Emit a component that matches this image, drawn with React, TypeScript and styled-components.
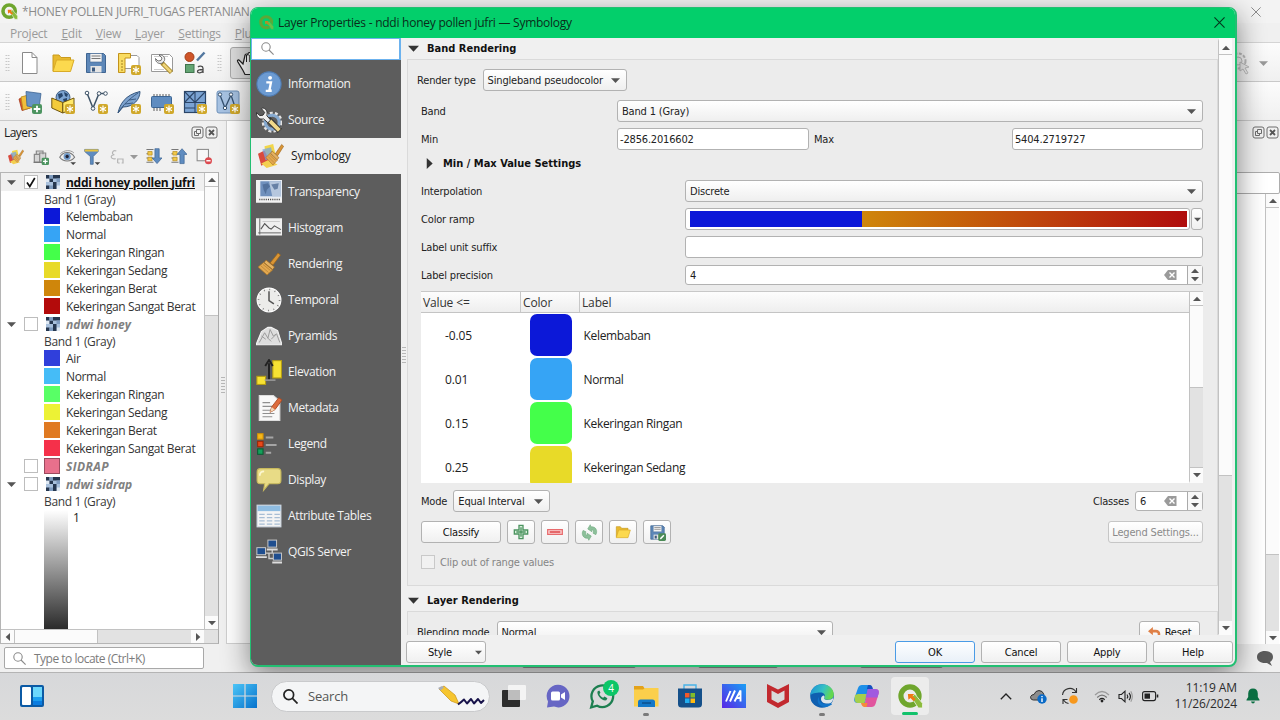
import React from "react";
import styled, { createGlobalStyle, css } from "styled-components";

const ui = `"Open Sans", "Noto Sans", sans-serif`;
const shell = `"DejaVu Sans Condensed", "DejaVu Sans", sans-serif`;

const Global = createGlobalStyle`
  * { box-sizing: border-box; }
  body { margin: 0; overflow: hidden; font-family: ${ui}; font-size: 12px; color: #1c1c1c; }
  svg { display: block; flex: none; }
`;

/* ---------- shell of the desktop ---------- */

const Desktop = styled.div`
  position: relative;
  width: 1280px;
  height: 720px;
  display: flex;
  flex-direction: column;
  overflow: hidden;
  background: #d9dadb;
`;
const MainWindow = styled.div`
  height: 673px;
  display: flex;
  flex-direction: column;
  background: #f0f0f0;
  border-bottom: 1px solid #b4b4b4;
`;
const MainTitle = styled.div`
  height: 23px;
  display: flex;
  align-items: center;
  justify-content: space-between;
  padding: 0 19px 0 1px;
  background: #f3f3f3;
  color: #8b8b8b;
`;
const TitleText = styled.div`
  display: flex;
  align-items: center;
  gap: 4px;
  white-space: nowrap;
  font-size: 12px;
  letter-spacing: -0.31px;
`;
const MenuBar = styled.div`
  height: 20px;
  display: flex;
  align-items: center;
  gap: 14px;
  padding: 1px 0 0 10px;
  color: #9a9a9a;
  border-bottom: 1px solid #d4d4d4;
  span { letter-spacing: -0.25px; }
`;
const Toolbar = styled.div`
  height: 39px;
  display: flex;
  align-items: center;
  padding: 2px 12px 0 5px;
  background: linear-gradient(#fcfcfc, #f0f0f0);
  border-bottom: 1px solid #c9c9c9;
`;
const Handle = styled.div<{ $ml?: number }>`
  width: 5px;
  height: 18px;
  margin: 0 8px 0 ${(p) => p.$ml || 0}px;
  background-image: radial-gradient(circle, #bdbdbd 0.7px, transparent 0.9px);
  background-size: 2.5px 3px;
`;
const ToolIcons = styled.div`
  display: flex;
  gap: 9px;
`;
const PressedTool = styled.div`
  width: 34px;
  height: 32px;
  border: 1px solid #aaa;
  border-radius: 3px;
  background: #dedede;
  display: flex;
  align-items: center;
  padding-left: 5px;
`;
const Spacer = styled.div`
  flex: 1;
`;
const Work = styled.div`
  flex: 1;
  min-height: 0;
  display: flex;
`;
const LayersDock = styled.div`
  width: 219px;
  display: flex;
  flex-direction: column;
`;
const DockHeader = styled.div`
  height: 21px;
  display: flex;
  align-items: center;
  gap: 1px;
  padding: 1px 1px 0 4px;
  span { flex: 1; letter-spacing: -0.55px; }
`;
const DockTools = styled.div`
  height: 30px;
  display: flex;
  align-items: center;
  padding: 0 4px 1px 7px;
`;
const ToolSlot = styled.div<{ $w: number }>`
  width: ${(p) => p.$w}px;
  display: flex;
  justify-content: center;
`;
const TreeFrame = styled.div`
  flex: 1;
  display: grid;
  grid-template: 1fr 14px / 1fr 14px;
  border: 1px solid #b5b5b5;
  border-right-color: #aaa;
  background: #fff;
`;
const Tree = styled.div`
  overflow: hidden;
  display: flex;
  flex-direction: column;
`;
const LayerRow = styled.div<{ $on?: boolean }>`
  height: 18px;
  display: flex;
  align-items: center;
  padding-left: 6px;
  background: ${(p) => (p.$on ? "#f0f0f0" : "#fff")};
`;
const Expander = styled.div`
  width: 17px;
`;
const LayerName = styled.span<{ $active?: boolean; $ls?: number }>`
  margin-left: 6px;
  font-weight: 700;
  white-space: nowrap;
  letter-spacing: ${(p) => p.$ls ?? 0}px;
  ${(p) =>
    p.$active
      ? css`text-decoration: underline; color: #111;`
      : css`font-style: italic; color: #808080;`}
`;
const IconCell = styled.div<{ $x?: number }>`
  margin-left: ${(p) => p.$x ?? -9}px;
`;
const Check = styled.div<{ $faint?: boolean }>`
  width: 14px;
  height: 14px;
  border: 1px solid ${(p) => (p.$faint ? "#c9c9c9" : "#bdbdbd")};
  background: ${(p) => (p.$faint ? "#f1f1f1" : "#fff")};
  display: flex;
  align-items: center;
  justify-content: center;
`;
const BandRow = styled.div`
  height: 16px;
  line-height: 18px;
  padding-left: 43px;
  color: #3a3a3a;
  letter-spacing: -0.33px;
`;
const ClassRow = styled.div`
  height: 18px;
  display: flex;
  align-items: center;
  gap: 6px;
  padding-left: 43px;
  white-space: nowrap;
  color: #333;
  letter-spacing: -0.36px;
`;
const Chip = styled.div<{ $c: string; $line?: string }>`
  width: 16px;
  height: 16px;
  background: ${(p) => p.$c};
  border: 1px solid ${(p) => p.$line || p.$c};
`;
const RampRow = styled.div`
  flex: 1;
  display: flex;
  gap: 5px;
  padding: 1px 0 0 43px;
  line-height: 15px;
`;
const GrayRamp = styled.div`
  width: 24px;
  background: linear-gradient(#fff, #2b2b2b);
`;

/* ---------- scroll bars ---------- */

const VBar = styled.div<{ $top?: number; $bottom?: number }>`
  display: flex;
  flex-direction: column;
  background: #e2e2e2;
  border: 0 solid #fbfbfb;
  border-left: 1px solid #c2c2c2;
  border-top-width: ${(p) => p.$top || 0}px;
  border-bottom-width: ${(p) => p.$bottom || 0}px;
`;
const HBar = styled.div`
  display: flex;
  background: #e2e2e2;
  border-top: 1px solid #c2c2c2;
`;
const BarButton = styled.div`
  min-width: 13px;
  height: 13px;
  background: #fbfbfb;
  display: flex;
  align-items: center;
  justify-content: center;
`;
const Thumb = styled.div<{ $h?: number; $w?: number }>`
  ${(p) => p.$h && `height: ${p.$h}px;`}
  ${(p) => p.$w && `width: ${p.$w}px;`}
  background: #fbfbfb;
  border: 0 solid #c2c2c2;
  border-width: ${(p) => (p.$w ? "0 1px" : "1px 0")};
`;

const Splitter = styled.div<{ $w: number; $top: number }>`
  width: ${(p) => p.$w}px;
  padding-top: ${(p) => p.$top}px;
  display: flex;
  justify-content: center;
`;
const Grip = styled.div`
  width: 4px;
  height: 18px;
  background-image: radial-gradient(circle, #b8b8b8 0.7px, transparent 0.9px);
  background-size: 2px 3px;
`;
const Canvas = styled.div`
  flex: 1;
  background: #fff;
  border: 1px solid #d0d0d0;
  border-top: 0;
`;
const RightDock = styled.div`
  width: 80px;
  display: flex;
  flex-direction: column;
`;
const RightHeader = styled.div`
  height: 51px;
  display: flex;
  justify-content: flex-end;
  gap: 1px;
  padding: 5px 1px 0 0;
`;
const RightInput = styled.div`
  height: 22px;
  background: #fff;
  border: 1px solid #adadad;
  border-radius: 2px;
`;
const RightTree = styled.div`
  flex: 1;
  display: grid;
  grid-template-columns: 1fr 14px;
  padding-right: 1px;
  background: #fff;
`;
const StatusBar = styled.div`
  height: 28px;
  display: flex;
  align-items: center;
  padding: 0 6px 0 4px;
`;
const Locator = styled.div`
  width: 200px;
  height: 22px;
  display: flex;
  align-items: center;
  gap: 8px;
  padding-left: 8px;
  border: 1px solid #a8a8a8;
  border-radius: 2px;
  background: #fff;
  color: #7c7c7c;
  letter-spacing: -0.5px;
`;
const StatusField = styled.div<{ $w: number; $ml: number }>`
  width: ${(p) => p.$w}px;
  height: 20px;
  margin-left: ${(p) => p.$ml}px;
  border: 1px solid #999;
  border-radius: 2px;
  background: #fff;
`;

/* ---------- dialog ---------- */

const Dialog = styled.div`
  position: absolute;
  left: 250px;
  top: 7px;
  width: 987px;
  height: 660px;
  display: flex;
  flex-direction: column;
  border: 1px solid #22bf72;
  border-right-width: 2px;
  border-bottom-width: 2px;
  border-radius: 8px;
  overflow: hidden;
  background: #f0f0f0;
  box-shadow: 0 8px 28px rgba(0, 0, 0, 0.48);
`;
const DialogTitle = styled.div`
  height: 30px;
  display: flex;
  align-items: center;
  gap: 4px;
  padding: 0 10px 1px 8px;
  background: #03cf6b;
  color: #0a2c1a;
  font-size: 12px;
  span { flex: 1; letter-spacing: -0.25px; }
`;
const DialogBody = styled.div`
  flex: 1;
  min-height: 0;
  display: flex;
`;
const Side = styled.div`
  width: 150px;
  display: flex;
  flex-direction: column;
  background: #5d5d5d;
`;
const SideSearch = styled.div`
  height: 22px;
  margin-bottom: 6px;
  display: flex;
  align-items: center;
  padding: 0 0 1px 9px;
  background: #fff;
  border: 1px solid #6cb2ee;
  border-right-width: 2px;
`;
const SideItem = styled.div<{ $on?: boolean }>`
  height: 36px;
  display: flex;
  align-items: center;
  gap: ${(p) => (p.$on ? 7 : 6)}px;
  padding-bottom: 1px;
  padding-left: ${(p) => (p.$on ? 7 : 5)}px;
  background: ${(p) => (p.$on ? "#f0f0f0" : "transparent")};
  color: ${(p) => (p.$on ? "#1c1c1c" : "#f2f2f2")};
  letter-spacing: ${(p) => (p.$on ? -0.15 : -0.36)}px;
`;
const Main = styled.div`
  flex: 1;
  min-width: 0;
  display: flex;
  flex-direction: column;
`;
const ScrollArea = styled.div`
  height: 597px;
  display: grid;
  grid-template-columns: 812px 14px;
  overflow: hidden;
`;
const Pane = styled.div`
  overflow: hidden;
  height: 597px;
  padding-left: 1px;
  font-family: ${shell};
  font-size: 11px;
`;
const Heading = styled.div<{ $h: number; $pl?: number; $pt?: number; $pb?: number }>`
  height: ${(p) => p.$h}px;
  display: flex;
  align-items: center;
  gap: 8px;
  padding: ${(p) => p.$pt || 0}px 0 ${(p) => p.$pb || 0}px ${(p) => p.$pl || 1}px;
  font-weight: 700;
  color: #111;
`;
const Group = styled.div<{ $h: number }>`
  height: ${(p) => p.$h}px;
  padding: 6px 14px 0 13px;
  border: 1px solid #dadada;
  background: #ececec;
`;
const Field = styled.div<{ $label: number }>`
  height: 28px;
  display: grid;
  grid-template-columns: ${(p) => p.$label}px 1fr;
  align-items: center;
`;
const Caption = styled.span<{ $dim?: boolean; $out?: boolean }>`
  letter-spacing: -0.17px;
  white-space: nowrap;
  color: ${(p) => (p.$dim ? "#858585" : "#222")};
  margin-left: ${(p) => (p.$out ? -4 : 0)}px;
`;
const boxed = css`
  height: 22px;
  display: flex;
  align-items: center;
  border: 1px solid #b2b2b2;
  border-radius: 3px;
  white-space: nowrap;
`;
const Combo = styled.div<{ $w?: number }>`
  ${boxed}
  ${(p) => p.$w && `width: ${p.$w}px;`}
  justify-content: space-between;
  padding: 0 6px 0 4px;
  background: linear-gradient(#fff, #efefef);
`;
const Input = styled.div`
  ${boxed}
  padding-left: 2px;
  background: #fff;
`;
const MinMax = styled.div`
  display: grid;
  grid-template-columns: 192px 203px 1fr;
  align-items: center;
  > span { padding-left: 5px; }
`;
const RampLine = styled.div`
  display: flex;
  gap: 1px;
`;
const RampBox = styled.div`
  ${boxed}
  flex: 1;
  padding: 2px 2px 2px 4px;
  background: #fff;
`;
const RampFill = styled.div`
  flex: 1;
  height: 16px;
  background: linear-gradient(90deg, #0c18d8 34.7%, #cf860b 34.7%, #b00d0d);
`;
const RampMenu = styled.div`
  ${boxed}
  width: 12px;
  justify-content: center;
  background: linear-gradient(#fff, #efefef);
`;
const Spin = styled.div<{ $w?: number }>`
  ${boxed}
  height: 20px;
  ${(p) => p.$w && `width: ${p.$w}px;`}
  padding-left: 4px;
  background: #fff;
  span { flex: 1; }
`;
const SpinButtons = styled.div`
  width: 15px;
  height: 18px;
  margin-left: 10px;
  display: flex;
  flex-direction: column;
  align-items: center;
  justify-content: space-evenly;
  border-left: 1px solid #aaa;
  background: #f8f8f8;
`;
const Table = styled.div`
  width: 782px;
  height: 192px;
  margin-top: 2px;
  display: grid;
  grid-template-columns: 1fr 14px;
  background: #fff;
  border-top: 1px solid #c8c8c8;
  overflow: hidden;
  font-family: ${ui};
  font-size: 12px;
`;
const Rows = styled.div`
  height: 191px;
  overflow: hidden;
`;
const HeadRow = styled.div`
  height: 21px;
  display: grid;
  grid-template-columns: 100px 59px 1fr;
  align-items: center;
  background: linear-gradient(#fdfdfd, #eeeeee);
  border-bottom: 1px solid #c4c4c4;
  color: #333;
  letter-spacing: -0.15px;
  span { padding: 1px 0 0 2px; line-height: 19px; border-right: 1px solid #c8c8c8; }
  span:last-child { border: 0; }
`;
const ValueRow = styled.div`
  height: 44px;
  display: grid;
  grid-template-columns: 108.5px 54px 1fr;
  align-items: center;
  color: #222;
  letter-spacing: -0.33px;
  span:first-child { padding-left: 24px; letter-spacing: -0.15px; }
`;
const Swatch = styled.div<{ $c: string }>`
  width: 42px;
  height: 42px;
  border-radius: 7px;
  background: ${(p) => p.$c};
`;
const Line = styled.div<{ $h: number; $mt?: number; $gap?: number }>`
  height: ${(p) => p.$h}px;
  margin-top: ${(p) => p.$mt || 0}px;
  display: flex;
  align-items: center;
  gap: ${(p) => p.$gap ?? 6}px;
`;
const Button = styled.div<{ $w: number; $primary?: boolean; $dim?: boolean }>`
  ${boxed}
  width: ${(p) => p.$w}px;
  flex: none;
  justify-content: center;
  font-family: ${shell};
  font-size: 11px;
  letter-spacing: -0.17px;
  color: ${(p) => (p.$dim ? "#8a8a8a" : "#111")};
  border-color: ${(p) => (p.$primary ? "#4a9be6" : p.$dim ? "#c6c6c6" : "#b2b2b2")};
  background: ${(p) => (p.$primary ? "linear-gradient(#fdfeff, #e9f0f8)" : "linear-gradient(#fff, #f0f0f0)")};
`;
const IconButton = styled.div`
  ${boxed}
  width: 28px;
  height: 24px;
  justify-content: center;
  background: linear-gradient(#fff, #f0f0f0);
`;
const Footer = styled.div`
  height: 30px;
  display: flex;
  align-items: center;
  gap: 6px;
  padding: 4px 2px 0 0;
`;
const StyleButton = styled(Button)`
  justify-content: space-between;
  padding: 0 3px 0 21px;
`;
const ResetButton = styled(Button)`
  gap: 4px;
  margin-right: 3px;
`;
const UpperTrack = styled.div`
  height: 82px;
  background: #fbfbfb;
  border-top: 1px solid #c2c2c2;
`;
const LowerTrack = styled.div`
  flex: 1;
  background: #e2e2e2;
  border: 1px solid #c2c2c2;
  border-width: 1px 0;
`;

/* ---------- task bar ---------- */

const TaskBar = styled.div`
  position: relative;
  height: 47px;
  display: flex;
  align-items: center;
  padding: 0 0 1px 20px;
  background: linear-gradient(#d7d8da, #dcdcdc);
`;
const StartGroup = styled.div`
  display: flex;
  align-items: center;
  margin-left: 189px;
`;
const SearchPill = styled.div`
  width: 219px;
  height: 31px;
  margin: 0 2px 0 14px;
  display: flex;
  align-items: center;
  gap: 10px;
  padding: 0 4px 0 11px;
  border-radius: 16px;
  border: 1px solid #c9cacc;
  background: #f4f5f6;
  color: #555;
  font-size: 13px;
  span { flex: 1; letter-spacing: -0.2px; }
`;
const Task = styled.div<{ $active?: boolean }>`
  position: relative;
  width: 38px;
  height: 38px;
  margin: 0 3px;
  display: flex;
  align-items: center;
  justify-content: center;
  border-radius: 4px;
  background: ${(p) => (p.$active ? "#ececec" : "transparent")};
`;
const Running = styled.i<{ $w: number; $c: string }>`
  position: absolute;
  bottom: ${(p) => (p.$w > 8 ? 0 : -1)}px;
  left: calc(50% - ${(p) => p.$w / 2}px);
  width: ${(p) => p.$w}px;
  height: 3px;
  border-radius: 2px;
  background: ${(p) => p.$c};
`;
const Unread = styled.b`
  position: absolute;
  right: 2px;
  top: 3px;
  width: 16px;
  height: 16px;
  border-radius: 50%;
  background: #0cc667;
  color: #fff;
  font-size: 10px;
  font-weight: 400;
  line-height: 16px;
  text-align: center;
`;
const Tray = styled.div`
  flex: 1;
  display: flex;
  align-items: center;
  justify-content: flex-end;
  padding-right: 20px;
`;
const TrayIcon = styled.div<{ $w: number }>`
  width: ${(p) => p.$w}px;
  display: flex;
  justify-content: center;
`;
const Clock = styled.div`
  width: 70px;
  margin-right: 9px;
  text-align: right;
  font-size: 12px;
  line-height: 16px;
  color: #2c2c2c;
  letter-spacing: -0.12px;
  white-space: nowrap;
`;

/* ---------- small drawings ---------- */

const Tri = ({ d = "down", s = 8, c = "#555" }: { d?: "up" | "down" | "left" | "right"; s?: number; c?: string }) => {
  const p = { down: "M0 2h8L4 6.3z", up: "M0 6h8L4 1.700z", left: "M6 0v8L1.700 4z", right: "M2 0v8l4.300-4z" }[d];
  return (
    <svg width={s} height={s} viewBox="0 0 8 8">
      <path d={p} fill={c} />
    </svg>
  );
};
const Magnifier = ({ s = 13, c = "#8a8a8a", w = 1.1 }) => (
  <svg width={s} height={s} viewBox="0 0 13 13" fill="none" stroke={c} strokeWidth={w}>
    <circle cx="5" cy="5" r="4.2" />
    <path d="M8 8l4.600 4.600" />
  </svg>
);
const Cross = ({ s = 10, c = "#333" }) => (
  <svg width={s} height={s} viewBox="0 0 10 10" stroke={c} fill="none">
    <path d="M.4.4l9.200 9.200M9.600.4L.4 9.600" />
  </svg>
);
const QLogo = ({ s = 17, dim = false }) => (
  <svg width={s} height={s} viewBox="0 0 24 24" opacity={dim ? 0.75 : 1}>
    <circle cx="11.500" cy="11.500" r="8.700" fill="none" stroke={dim ? "#7c9a26" : "#6fa62d"} strokeWidth="5" />
    <path d="M13 13l3-3.500 7.500 9v4.500h-4z" fill="#8cbb3c" stroke={dim ? "#03cf6b" : "#eef3e6"} strokeWidth=".8" />
    <path d="M9.500 9.500h6l-1.500 2 3 3-2 2-3-3-2 1.500z" fill="#ee7913" />
  </svg>
);
const FloatIcon = () => (
  <svg width="13" height="13" viewBox="0 0 13 13" fill="none" stroke="#6d6d6d">
    <rect x="1" y="1" width="11" height="11" rx="2" />
    <path d="M5.500 3.500h4v4h-4zM5.500 5.500h-2v4h4v-2" />
  </svg>
);
const CloseIcon = () => (
  <svg width="13" height="13" viewBox="0 0 13 13" fill="none" stroke="#6d6d6d">
    <rect x="1" y="1" width="11" height="11" rx="2" />
    <path d="M4 4l5 5M9 4L4 9" stroke="#555" strokeWidth="1.800" />
  </svg>
);
const RasterIcon = () => (
  <svg width="14" height="14" viewBox="0 0 12 12">
    <path fill="#a9c1dd" d="M0 0h12v12H0z" />
    <path fill="#dfe9f4" d="M0 3h3v3H0zM9 9h3v3H9z" />
    <path fill="#26374f" d="M0 0h3v3H0zM6 0h3v3H6zM9 0h3v3H9zM3 3h3v3H3zM6 6h3v3H6zM0 9h3v3H0zM6 9h3v3H6z" />
    <path fill="#7f9cc0" d="M3 0h3v3H3zM9 3h3v3H9zM3 9h3v3H3z" />
  </svg>
);
const Tick = () => (
  <svg width="10" height="11" viewBox="0 0 10 11" fill="none" stroke="#111" strokeWidth="1.700">
    <path d="M1 5.500L3.800 9.500 8.800 1" />
  </svg>
);
const Erase = () => (
  <svg width="13" height="10" viewBox="0 0 13 10">
    <path d="M4 0h8.500v10H4L0 5z" fill="#9a9a9a" />
    <path d="M5.500 2.500l5 5m0-5l-5 5" stroke="#fff" strokeWidth="1.400" />
  </svg>
);
const Star = () => (
  <g>
    <rect x="14" y="14" width="10" height="10" rx="2" fill="#d0a82a" />
    <path d="M19 15.500v7M16 17.200l6 3.600M22 17.200l-6 3.600" stroke="#fff" strokeWidth="1.200" />
  </g>
);
const I = ({ children, s = 24 }: { children: React.ReactNode; s?: number }) => (
  <svg width={s} height={s} viewBox="0 0 24 24" fill="none">
    {children}
  </svg>
);
const NewIcon = () => (
  <I>
    <path d="M4.500 1.500h9.500l5 5V22.500H4.500z" fill="#fff" stroke="#8a8a8a" />
    <path d="M14 1.500V6.500h5" stroke="#8a8a8a" />
  </I>
);
const FolderIcon = ({ s = 24 }) => (
  <I s={s}>
    <path d="M2 20V4h6l2 2.500h9.500V9" fill="#e8b92f" stroke="#c99b1d" />
    <path d="M2 20.500L5.500 9H23l-3.500 11.500z" fill="#fcd94e" stroke="#d9ab27" />
  </I>
);
const SaveIcon = ({ s = 24, edit = false }) => (
  <I s={s}>
    <path d="M2.500 2.500h17l2 2v17h-19z" fill="#5d87b8" stroke="#3f6592" />
    <path d="M6 2.500h12v8.500H6z" fill="#f3f3f3" stroke="#3f6592" strokeWidth=".6" />
    <path d="M7.500 5h9M7.500 7.500h9" stroke="#777" />
    <path d="M6.500 15h11v6.500h-11z" fill="#e4e4e4" />
    <path d="M8 16.500h3v4H8z" fill="#3c5a80" />
    {edit && (
      <g>
        <rect x="13" y="13" width="11" height="11" rx="2" fill="#4c8b57" />
        <path d="M16 21l5-5" stroke="#fff" strokeWidth="2" />
      </g>
    )}
  </I>
);
const LayoutIcon = () => (
  <I>
    <path d="M6 4.500h14l2 2v11H6z" fill="#fff" stroke="#999" />
    <path d="M1.500 2.500h12v4.500H8v14.500H1.500z" fill="#f9dc62" stroke="#c2921a" />
    <path d="M4 10h2M4 13h2M4 16h2M4 19h2" stroke="#8d6b10" strokeWidth=".8" />
    <Star />
  </I>
);
const ManagerIcon = () => (
  <I>
    <path d="M1.500 3.500h18l3 3v14H1.500z" fill="#fff" stroke="#999" />
    <path d="M4 5.500h14M4 18.500h10" stroke="#ccc" />
    <path d="M12 12l9.500 9.500" stroke="#a5862b" strokeWidth="4.500" />
    <path d="M13 13l8 8" stroke="#efd579" strokeWidth="2.500" />
    <path d="M9 4l3 3-1 2.500-3 .5-2.500-2.500c0 4 3.500 6 7 4.500l2-2.500c1-3.500-2-6-5.500-5.500z" fill="#ededed" stroke="#555" strokeWidth=".8" />
  </I>
);
const StyleManagerIcon = () => (
  <I>
    <circle cx="6.500" cy="6" r="4.500" fill="#cf5529" stroke="#a43d17" />
    <path d="M14 9.500l7.500-8" stroke="#52779f" strokeWidth="2.500" />
    <rect x="2.500" y="13.500" width="8.500" height="8" fill="#63a573" stroke="#41754e" />
    <path d="M15 16.200c1-1.500 5-1.500 5 1V22M20 18.500c-3 0-5.500.3-5.500 2s4 2 5.500-.5" stroke="#4a4a4a" strokeWidth="1.300" />
  </I>
);
const HandIcon = () => (
  <svg width="24" height="26" viewBox="0 0 24 26">
    <path
      d="M7 14L3.500 10.500C2 9 .8 10.500 2 12.200l5 8.300 2 4h10l1.500-5V8.500c0-2-2.500-2-2.500 0V5.500c0-2-3-2-3 0V4c0-2-3-2-3 0v1.500c0-2-3-2-3 0z"
      fill="#fff"
      stroke="#222"
      strokeWidth="1.200"
    />
    <path d="M10.500 5v7M13.800 5v7M17.500 6v6" stroke="#222" />
  </svg>
);
const AddLayerIcon = () => (
  <I>
    <path d="M1 9l8-3 3 12-8 2.500z" fill="#d9512c" stroke="#a63a1c" strokeWidth=".8" />
    <path d="M3 7l9-2.500 2 13-9 2.500z" fill="#f0be3c" stroke="#b8891b" strokeWidth=".8" />
    <path d="M8 1.500l15 2-2 14.500-12-2z" fill="#6792c5" stroke="#3d6593" strokeWidth=".8" />
    <rect x="14" y="14" width="10" height="10" rx="2" fill="#4c9460" />
    <path d="M19 15.700v6.600M15.700 19h6.600" stroke="#fff" strokeWidth="1.800" />
  </I>
);
const GeoPackageIcon = () => (
  <I>
    <circle cx="12" cy="7.500" r="7" fill="#7da5d3" stroke="#27466c" strokeWidth=".8" />
    <path d="M7 4l4-1 1 3-4 3zM13 2l4 2-1 3-2-1zM12 9l4-1v4h-3z" fill="#27466c" />
    <path d="M.8 8l11 4.500v10.500L.8 18z" fill="#f3cb3a" stroke="#6e5510" />
    <path d="M11.800 12.500L23 8v10l-11.200 5z" fill="#ffe868" stroke="#6e5510" />
    <Star />
  </I>
);
const ShapeIcon = () => (
  <I>
    <path d="M3 3l6 15L15 3.500h7" stroke="#3f5468" strokeWidth="1.500" />
    <g fill="#fff" stroke="#3f5468">
      <circle cx="3" cy="3" r="1.800" />
      <circle cx="9" cy="18.500" r="1.800" />
      <circle cx="15" cy="3.500" r="1.800" />
      <circle cx="21.500" cy="3.500" r="1.800" />
    </g>
    <Star />
  </I>
);
const FeatherIcon = () => (
  <I>
    <path d="M1 23C3 14 8 5 23 1.500 23 9 17 17 6 17z" fill="#7ea3cf" stroke="#34557c" />
    <path d="M1 23C6 15 12 9 21 3M8 14l8-1M12 10l7-1" stroke="#34557c" strokeWidth=".9" />
    <Star />
  </I>
);
const ChipIcon = () => (
  <I>
    <path d="M4 4v4M7 4v4M10 4v4M13 4v4M16 4v4M19 4v4M4 17v4M7 17v4M10 17v4" stroke="#888" strokeWidth="1.400" />
    <rect x="1.500" y="6.500" width="20" height="11" rx="1" fill="#5f8cc0" stroke="#3d6593" />
    <Star />
  </I>
);
const MeshIcon = () => (
  <I>
    <rect x="1.500" y="1.500" width="21" height="21" fill="#7ba3d3" stroke="#2c4668" strokeWidth="1.200" />
    <path d="M1.500 12.500h21M12 1.500v21M1.500 1.500l10.500 11 10.500-11M1.500 12.500L12 1.500M1.500 18H12" stroke="#2c4668" strokeWidth="1.100" />
    <Star />
  </I>
);
const VirtualIcon = () => (
  <I>
    <rect x="1" y="1" width="22" height="22" rx="2" fill="#a7c2e2" stroke="#6c8fb8" />
    <path d="M4 5l5 13L15 5l4 12" stroke="#35506f" strokeWidth="1.300" />
    <g fill="#fff" stroke="#35506f">
      <circle cx="4" cy="4.500" r="1.700" />
      <circle cx="9" cy="18" r="1.700" />
      <circle cx="15" cy="4.500" r="1.700" />
    </g>
    <Star />
  </I>
);

const Brush = ({ y = 0 }) => (
  <g transform={`translate(0 ${y})`}>
    <path d="M13 11l8-10 2.500 2-7.500 10z" fill="#d99535" stroke="#9b6319" strokeWidth=".7" />
    <path d="M9 8l8.500 7-2 2.500L7 10.500z" fill="#e5b263" stroke="#9b6319" strokeWidth=".7" />
    <path d="M6.500 10.500l9 7.500L10 23 1 15z" fill="#e3a850" stroke="#a97326" strokeWidth=".7" />
    <path d="M4 14l7.500 6.500M6 12.500l7.500 6" stroke="#b67f2e" strokeWidth=".7" />
  </g>
);
const PaintIcon = ({ s = 24 }) => (
  <I s={s}>
    <path d="M6 3l8-2 2 9-9 3z" fill="#f1d64a" />
    <path d="M0 10l6-3 5 10-8 4z" fill="#d94a3d" />
    <path d="M4 6l8-2 2 9-7 3z" fill="#78a7df" opacity=".75" />
    <path d="M3 19l8-4 7 5-10 3z" fill="#f3cf4f" />
    <g transform="translate(6.500 .5) scale(.73 .86)">
      <Brush />
    </g>
  </I>
);
const GroupAddIcon = () => (
  <I s={16}>
    <path d="M5 8V3h10v5M2 20V8h8v12zM10 20V6h9v14z" stroke="#888" strokeWidth="1.800" fill="#d6d6d6" />
    <path d="M1 20h14" stroke="#777" strokeWidth="2" />
    <rect x="13" y="13" width="11" height="11" rx="2" fill="#4c9460" />
    <path d="M18.500 15v7M15 18.500h7" stroke="#fff" strokeWidth="2" />
  </I>
);
const EyeIcon = () => (
  <I s={17}>
    <path d="M1 13c5-9 16-9 21 0-5 7-16 7-21 0z" fill="#eee" stroke="#777" strokeWidth="1.500" />
    <circle cx="11.500" cy="12" r="5" fill="#6e97c5" />
    <circle cx="11.500" cy="12" r="2.300" fill="#223" />
    <path d="M2 8c5-5 14-6 19-1" stroke="#999" strokeWidth="1.400" />
    <path d="M16 20h8l-4 4z" fill="#444" />
  </I>
);
const FilterIcon = () => (
  <I s={17}>
    <path d="M1 2h19v3l-7 7v11H9V12L1 5z" fill="#5f8cc0" stroke="#3d6593" />
    <path d="M1 2h19v3H1z" fill="#e9c33f" />
    <path d="M15 20h8l-4 4z" fill="#444" />
  </I>
);
const ExprIcon = () => (
  <I s={16}>
    <path d="M11 3C5 1 3 8 8 8.500 1 9 2 16 10 14.500M13 21v-6h8v6M13 21h3M19 21h3" stroke="#b5b5b5" strokeWidth="1.800" />
  </I>
);
const ExpandIcon = ({ up = false }) => (
  <I s={17}>
    <path d="M2 2h10M2 8h8M2 14h8M2 20h10" stroke="#777" strokeWidth="1.500" />
    <path d="M4 5h6v5H4zM4 13h6v5H4z" fill="#f2c94a" stroke="#b58c1c" />
    <path d={up ? "M14 22V9h-4l7-8 7 8h-4v13z" : "M14 1v13h-4l7 8 7-8h-4V1z"} fill="#5f8cc0" stroke="#3d6593" />
  </I>
);
const RemoveIcon = () => (
  <I s={17}>
    <rect x="3" y="2" width="16" height="16" fill="#f7f7f7" stroke="#8c8c8c" strokeWidth="1.500" />
    <circle cx="19" cy="18" r="5" fill="#dc4a4f" />
    <path d="M16 18h6" stroke="#fff" strokeWidth="2" />
  </I>
);

const side: Record<string, React.ReactNode> = {
  Information: (
    <I s={26}>
      <circle cx="12" cy="12" r="11.200" fill="#6c9bd2" stroke="#4f7cb3" />
      <circle cx="13" cy="6.300" r="1.800" fill="#fff" />
      <path d="M9.500 10.500h4.300l-1.500 7.500h2M9 18.300h5.500" stroke="#fff" strokeWidth="2.200" />
    </I>
  ),
  Source: (
    <I s={26}>
      <circle cx="15" cy="14" r="6.500" fill="none" stroke="#86a9cf" strokeWidth="3" />
      <circle cx="15" cy="14" r="8.700" fill="none" stroke="#e4e4e4" strokeWidth="2" strokeDasharray="2.800 2" />
      <path d="M11 11l11 11" stroke="#333" strokeWidth="5.500" />
      <path d="M12.500 12.500l9 9" stroke="#f0d98a" strokeWidth="3.600" />
      <path d="M6 1l-1 .5L8 5 6.500 7.500 3.500 8 .5 5C0 9 3 12 7 11l4 3.500 2.500-2.500L10 8c1-4-1-7-4-7z" fill="#efefef" stroke="#333" strokeWidth=".9" />
    </I>
  ),
  Symbology: <PaintIcon s={26} />,
  Transparency: (
    <I s={26}>
      <path d="M0 1h24v17H0z" fill="#e9eef5" />
      <path d="M4 2h19v14H4z" fill="#6f90bd" />
      <path d="M12 2h11v14h-8z" fill="#b6c7de" />
      <path d="M6 5l5-1 2 3-3 3-1 4-2-4zM14 5l7-1-1 5-3 1z" fill="#46648f" opacity=".7" />
      <path d="M0 1h3.500v21H0zM0 17.500h24V22H0z" fill="#f2f2f2" />
      <path d="M3 19h20" stroke="#444" strokeWidth="1.400" strokeDasharray="1 1" />
    </I>
  ),
  Histogram: (
    <I s={26}>
      <path d="M0 3h24v16H0z" fill="#efefef" />
      <path d="M3.500 3v15M2 16.500h21" stroke="#666" strokeWidth=".9" />
      <path d="M4.500 13L8 8l4 4 2 1 3-3 6 3.500" stroke="#555" strokeWidth="1" />
      <path d="M6 6h16" stroke="#ccc" />
    </I>
  ),
  Rendering: (
    <I s={26}>
      <g transform="translate(1 1) scale(.92)"><Brush /></g>
    </I>
  ),
  Temporal: (
    <I s={26}>
      <circle cx="12" cy="12" r="11" fill="#ececea" stroke="#fff" strokeWidth="1" />
      <circle cx="12" cy="12" r="9.700" stroke="#777" strokeWidth="1.500" strokeDasharray=".8 4.280" />
      <path d="M12 4v8.500l4.500 3" stroke="#555" strokeWidth="1.400" />
    </I>
  ),
  Pyramids: (
    <I s={26}>
      <path d="M0 20L5 8l6-4h3l6 3 4 13z" fill="#dedede" stroke="#f4f4f4" />
      <path d="M3 18l5-9 3 5 2-8 3 6 3-2 3 8M5 12l4 3M14 15l4-4M11 14l3 3" stroke="#9a9a9a" strokeWidth=".9" />
    </I>
  ),
  Elevation: (
    <I s={26}>
      <rect x="15.500" y="1.500" width="8" height="16" fill="#f7e233" stroke="#b49d14" />
      <rect x=".8" y="16" width="8" height="7.500" fill="#f7e233" stroke="#b49d14" />
      <path d="M12 19V4M8.500 6.500L12 1l3.500 5.500" stroke="#222" strokeWidth="1.800" />
      <path d="M8 19.500h10" stroke="#999" strokeWidth="1.400" />
    </I>
  ),
  Metadata: (
    <I s={26}>
      <path d="M3 .5h13l6 5V23.500H3z" fill="#f8f8f8" stroke="#ddd" />
      <path d="M6 7h7M6 10.500h10M6 14h9M6 17h11M6 20h9" stroke="#8f8f8f" />
      <path d="M13 16l1.500-5L21 2.500l3 2.200-6.500 8.800z" fill="#dd6b3c" stroke="#a8451d" strokeWidth=".8" />
      <path d="M13 16l1.500-5 3 2.500z" fill="#f1d7b8" />
    </I>
  ),
  Legend: (
    <I s={26}>
      <rect x="1.500" y="2.500" width="5" height="5" fill="#f5b81b" stroke="#d49204" />
      <rect x="1.500" y="9.500" width="5" height="5" fill="#e8481b" stroke="#9f2704" />
      <rect x="1.500" y="16.500" width="5" height="5" fill="#14a05a" stroke="#0a5d33" />
      <path d="M9 6h7M9 13h10M9 20h5" stroke="#a5a5a5" strokeWidth="1.800" />
    </I>
  ),
  Display: (
    <I s={26}>
      <path d="M4 1.500h16q3 0 3 3v8q0 3-3 3h-8L7 21.500l1-6H4q-3 0-3-3v-8q0-3 3-3z" fill="#e8db86" stroke="#c7b95c" />
      <path d="M3.500 8q0-4 4-4" stroke="#fbf6cf" strokeWidth="1.600" />
    </I>
  ),
  "Attribute Tables": (
    <I s={26}>
      <rect x="1" y="2" width="22" height="20" fill="#f4f4f4" stroke="#cfd8e2" />
      <path d="M1.500 2.500h21v5h-21z" fill="#8fbde2" />
      <path d="M3 10.500h5M10 10.500h5M17 10.500h5M3 13.500h5M10 13.500h5M17 13.500h5M3 16.500h5M10 16.500h5M17 16.500h5M3 19.500h5M10 19.500h5M17 19.500h5" stroke="#a7bdd4" strokeWidth="1.300" />
    </I>
  ),
  "QGIS Server": (
    <I s={26}>
      <path d="M7 13h8v-3M12 13v5h4" stroke="#ccc" strokeWidth="1.300" />
      <g stroke="#c9c9c9" strokeWidth=".9" fill="#1f4e8f">
        <rect x="11" y="1" width="8" height="6.500" />
        <rect x=".8" y="8" width="8" height="6.500" />
        <rect x="16" y="13" width="7.500" height="6.500" />
      </g>
      <path d="M10 9.700h10M0 16.700h10M15 21.700h9" stroke="#dedede" strokeWidth="1.700" />
    </I>
  ),
};

/* ---------- composed pieces ---------- */

const Arrow = () => <Tri s={9} />;
const Spinner = () => (
  <SpinButtons>
    <Tri d="up" s={8} />
    <Tri d="down" s={8} />
  </SpinButtons>
);
const Classes = ({ items }: { items: [string, string][] }) => (
  <>
    <BandRow>Band 1 (Gray)</BandRow>
    {items.map(([c, t]) => (
      <ClassRow key={t}>
        <Chip $c={c} />
        {t}
      </ClassRow>
    ))}
  </>
);
const nddi: [string, string][] = [
  ["#0c18d8", "Kelembaban"],
  ["#36a4f5", "Normal"],
  ["#44ff4a", "Kekeringan Ringan"],
  ["#e8da28", "Kekeringan Sedang"],
  ["#cf860b", "Kekeringan Berat"],
  ["#b30b0b", "Kekeringan Sangat Berat"],
];
const ndwi: [string, string][] = [
  ["#303fdb", "Air"],
  ["#45bcf7", "Normal"],
  ["#58ff66", "Kekeringan Ringan"],
  ["#ecf235", "Kekeringan Sedang"],
  ["#e07a22", "Kekeringan Berat"],
  ["#f5304a", "Kekeringan Sangat Berat"],
];
const values = ["-0.05", "0.01", "0.15", "0.25"];

const Layers = () => (
  <LayersDock>
    <DockHeader>
      <span>Layers</span>
      <FloatIcon />
      <CloseIcon />
    </DockHeader>
    <DockTools>
      <ToolSlot $w={18}><PaintIcon s={16} /></ToolSlot>
      <ToolSlot $w={32}><GroupAddIcon /></ToolSlot>
      <ToolSlot $w={20}><EyeIcon /></ToolSlot>
      <ToolSlot $w={30}><FilterIcon /></ToolSlot>
      <ToolSlot $w={20}><ExprIcon /></ToolSlot>
      <ToolSlot $w={14}><Tri c="#999" /></ToolSlot>
      <ToolSlot $w={24}><ExpandIcon /></ToolSlot>
      <ToolSlot $w={26}><ExpandIcon up /></ToolSlot>
      <ToolSlot $w={24}><RemoveIcon /></ToolSlot>
    </DockTools>
    <TreeFrame>
      <Tree>
        <LayerRow $on>
          <Expander><Tri s={9} /></Expander>
          <Check><Tick /></Check>
          <Expander />
          <IconCell><RasterIcon /></IconCell>
          <LayerName $active $ls={-0.3}>nddi honey pollen jufri</LayerName>
        </LayerRow>
        <Classes items={nddi} />
        <LayerRow>
          <Expander><Tri s={9} /></Expander>
          <Check />
          <Expander />
          <IconCell><RasterIcon /></IconCell>
          <LayerName>ndwi honey</LayerName>
        </LayerRow>
        <Classes items={ndwi} />
        <LayerRow>
          <Expander />
          <Check />
          <Expander />
          <IconCell $x={-11}><Chip $c="#e8708c" $line="#9b4a5e" /></IconCell>
          <LayerName $ls={0.4}>SIDRAP</LayerName>
        </LayerRow>
        <LayerRow>
          <Expander><Tri s={9} /></Expander>
          <Check />
          <Expander />
          <IconCell><RasterIcon /></IconCell>
          <LayerName>ndwi sidrap</LayerName>
        </LayerRow>
        <BandRow>Band 1 (Gray)</BandRow>
        <RampRow>
          <GrayRamp />1
        </RampRow>
      </Tree>
      <VBar>
        <BarButton><Tri d="up" /></BarButton>
        <Thumb $h={130} />
        <Spacer />
        <BarButton><Tri /></BarButton>
      </VBar>
      <HBar>
        <BarButton><Tri d="left" /></BarButton>
        <Thumb $w={84} />
        <Spacer />
        <BarButton><Tri d="right" /></BarButton>
      </HBar>
      <HBar />
    </TreeFrame>
  </LayersDock>
);

const PropertiesDialog = () => (
  <Dialog>
    <DialogTitle>
      <QLogo s={15} dim />
      <span>Layer Properties - nddi honey pollen jufri — Symbology</span>
      <Cross c="#04361d" s={11} />
    </DialogTitle>
    <DialogBody>
      <Side>
        <SideSearch><Magnifier /></SideSearch>
        {Object.keys(side).map((k) => (
          <SideItem key={k} $on={k === "Symbology"}>
            {side[k]}
            {k}
          </SideItem>
        ))}
      </Side>
      <Splitter $w={5} $top={308}><Grip /></Splitter>
      <Main>
        <ScrollArea>
          <Pane>
            <Heading $h={21}><Tri s={11} c="#333" />Band Rendering</Heading>
            <Group $h={527}>
              <Line $h={28} $gap={7}>
                <Caption $out>Render type</Caption>
                <Combo $w={144}><Caption>Singleband pseudocolor</Caption><Arrow /></Combo>
              </Line>
              <Line $h={3} />
              <Field $label={196}>
                <Caption>Band</Caption>
                <Combo><Caption>Band 1 (Gray)</Caption><Arrow /></Combo>
              </Field>
              <Field $label={196}>
                <Caption>Min</Caption>
                <MinMax>
                  <Input><Caption>-2856.2016602</Caption></Input>
                  <Caption>Max</Caption>
                  <Input><Caption>5404.2719727</Caption></Input>
                </MinMax>
              </Field>
              <Heading $h={24} $pl={3} $pb={3}><Tri d="right" s={11} c="#333" />Min / Max Value Settings</Heading>
              <Field $label={264}>
                <Caption>Interpolation</Caption>
                <Combo><Caption>Discrete</Caption><Arrow /></Combo>
              </Field>
              <Field $label={264}>
                <Caption>Color ramp</Caption>
                <RampLine>
                  <RampBox><RampFill /></RampBox>
                  <RampMenu><Tri s={7} /></RampMenu>
                </RampLine>
              </Field>
              <Field $label={264}>
                <Caption>Label unit suffix</Caption>
                <Input />
              </Field>
              <Field $label={264}>
                <Caption>Label precision</Caption>
                <Spin><span>4</span><Erase /><Spinner /></Spin>
              </Field>
              <Table>
                <Rows>
                  <HeadRow><span>Value &lt;=</span><span>Color</span><span>Label</span></HeadRow>
                  {values.map((v, i) => (
                    <ValueRow key={v}>
                      <span>{v}</span>
                      <Swatch $c={nddi[i][0]} />
                      <span>{nddi[i][1]}</span>
                    </ValueRow>
                  ))}
                </Rows>
                <VBar $bottom={2}>
                  <BarButton><Tri d="up" /></BarButton>
                  <UpperTrack />
                  <LowerTrack />
                  <BarButton><Tri /></BarButton>
                </VBar>
              </Table>
              <Line $h={22} $mt={7}>
                <Caption>Mode</Caption>
                <Combo $w={97}><Caption>Equal Interval</Caption><Arrow /></Combo>
                <Spacer />
                <Caption>Classes</Caption>
                <Spin $w={68}><span>6</span><Erase /><Spinner /></Spin>
              </Line>
              <Line $h={24} $mt={8}>
                <Button $w={80}>Classify</Button>
                <IconButton>
                  <I s={16}><path d="M9 2h6v7h7v6h-7v7H9v-7H2V9h7z" fill="#d9efdc" stroke="#4c9460" strokeWidth="2" /><path d="M12 5v14M5 12h14" stroke="#4c9460" strokeWidth="2" /></I>
                </IconButton>
                <IconButton>
                  <I s={16}><path d="M1 8.500h22v7H1z" fill="#fbd3d3" stroke="#e86a6c" strokeWidth="1.800" /><path d="M4 12h16" stroke="#e05255" strokeWidth="2.500" /></I>
                </IconButton>
                <IconButton>
                  <I s={17}>
                    <path d="M11 23l-1-3C3 21 0 14 3 9l4 2c-1.500 3 0 5 2.500 4.500L8.500 13l6 4zM13 1l1 3c7-1 10 6 7 11l-4-2c1.500-3 0-5-2.500-4.500l1 2.500-6-4z" fill="#8cc09a" stroke="#6aa67a" strokeWidth=".8" />
                  </I>
                </IconButton>
                <IconButton><FolderIcon s={16} /></IconButton>
                <IconButton><SaveIcon s={17} edit /></IconButton>
                <Spacer />
                <Button $w={95} $dim>Legend Settings...</Button>
              </Line>
              <Line $h={22} $mt={7} $gap={5}>
                <Check $faint />
                <Caption $dim>Clip out of range values</Caption>
              </Line>
            </Group>
            <Heading $h={25} $pl={1} $pt={3}><Tri s={11} c="#333" />Layer Rendering</Heading>
            <Group $h={80}>
              <Line $h={28} $gap={7}>
                <Caption $out>Blending mode</Caption>
                <Combo $w={336}><Caption>Normal</Caption><Arrow /></Combo>
                <Spacer />
                <ResetButton $w={61}>
                  <I s={13}><path d="M9 2L0 9.500 9 17v-5h6c4 0 4 6 0 8v3h5c5-8 3-16-6-16H9z" fill="#df8047" /></I>
                  Reset
                </ResetButton>
              </Line>
            </Group>
          </Pane>
          <VBar $top={3} $bottom={1}>
            <BarButton><Tri d="up" /></BarButton>
            <Thumb $h={422} />
            <Spacer />
            <BarButton><Tri /></BarButton>
          </VBar>
        </ScrollArea>
        <Footer>
          <StyleButton $w={80}>Style<Tri s={7} /></StyleButton>
          <Spacer />
          <Button $w={80} $primary>OK</Button>
          <Button $w={80}>Cancel</Button>
          <Button $w={80}>Apply</Button>
          <Button $w={80}>Help</Button>
        </Footer>
      </Main>
    </DialogBody>
  </Dialog>
);

const Tasks = () => (
  <TaskBar>
    <svg width="24" height="22" viewBox="0 0 24 22">
      <rect width="24" height="22" rx="2" fill="#0b5aa5" />
      <rect x="2" y="2" width="9" height="18" rx="1" fill="#fff" />
      <rect x="13" y="2" width="9" height="10" fill="#6cd8fc" />
      <rect x="13" y="12" width="9" height="4" fill="#1b9ff0" />
      <rect x="13" y="16" width="9" height="4" fill="#0a7ce0" />
    </svg>
    <StartGroup>
      <svg width="24" height="24" viewBox="0 0 24 24">
        <defs>
          <linearGradient id="win" x1="0" y1="0" x2="1" y2="1">
            <stop offset="0" stopColor="#4cc5f7" />
            <stop offset="1" stopColor="#0672cc" />
          </linearGradient>
        </defs>
        <path d="M0 0h11.400v11.400H0zM12.600 0H24v11.400H12.600zM0 12.600h11.400V24H0zM12.600 12.600H24V24H12.600z" fill="url(#win)" />
      </svg>
      <SearchPill>
        <Magnifier s={15} c="#222" w={1.5} />
        <span>Search</span>
        <svg width="48" height="22" viewBox="0 0 48 22" fill="none">
          <path d="M2 4l5-3 11 9 4 9-8-3z" fill="#f6c52f" stroke="#c99216" strokeWidth=".7" />
          <path d="M1 3l4-2 2 1.500-3.500 3z" fill="#a9adb5" />
          <path d="M21 19.500q4-3 6-5l3 4 4-4.500 3 4.500 4-4.500 3 4 3-3" stroke="#17124a" strokeWidth="2" strokeLinejoin="round" />
        </svg>
      </SearchPill>
      <Task>
        <svg width="24" height="24" viewBox="0 0 24 24">
          <rect x="0" y="6" width="18" height="17" rx="1" fill="#2d2d2d" />
          <rect x="6" y="1" width="18" height="15" rx="1" fill="#f7f7f7" opacity=".88" />
          <rect x="6" y="6" width="12" height="10" fill="#bdbdbd" />
        </svg>
      </Task>
      <Task>
        <svg width="24" height="24" viewBox="0 0 24 24">
          <path d="M12 .8a11.300 11.300 0 1 1-4 21.800L1 23.500l1-6A11.300 11.300 0 0 1 12 .8z" fill="#6766c4" />
          <rect x="5" y="7.500" width="9" height="9" rx="1.500" fill="#fff" />
          <path d="M15 10.500l4-2.500v8l-4-2.500z" fill="#fff" />
        </svg>
      </Task>
      <Task>
        <svg width="26" height="26" viewBox="0 0 24 24" fill="none">
          <path d="M2 22.500l1.500-5.500A10 10 0 1 1 7.500 21z" stroke="#1d7f50" strokeWidth="2.100" />
          <path d="M8 7.500c-1.500 3 4 9.500 8 8.500l1-2-2.700-1.500-1.200 1.200c-1.500-.5-3-2-3.500-3.500l1-1.200L9.500 7z" fill="#1d7f50" />
        </svg>
        <Unread>4</Unread>
      </Task>
      <Task>
        <svg width="25" height="24" viewBox="0 0 25 24">
          <path d="M0 2h9l2 3h13v17H0z" fill="#e3a21a" />
          <path d="M0 5.500h9L11 4h13.500v18.500H0z" fill="#fbcf4b" />
          <path d="M4 23v-5q0-2.500 2.500-2.500h12Q21 15.500 21 18v5z" fill="#1478c8" />
          <path d="M8 19h9" stroke="#0b4f8c" strokeWidth="1.500" />
        </svg>
        <Running $w={6} $c="#7a7a7a" />
      </Task>
      <Task>
        <svg width="24" height="24" viewBox="0 0 24 24">
          <path d="M6 5V1h12v4" stroke="#48b3e8" strokeWidth="1.400" fill="none" />
          <path d="M0 4.500h24V20q0 3.500-3.500 3.500h-17Q0 23.500 0 20z" fill="#15508a" />
          <path d="M7 9h4.500v4.500H7z" fill="#f1592a" />
          <path d="M12.500 9H17v4.500h-4.500z" fill="#80bc29" />
          <path d="M7 14.500h4.500V19H7z" fill="#22aef0" />
          <path d="M12.500 14.500H17V19h-4.500z" fill="#fdba12" />
        </svg>
      </Task>
      <Task>
        <svg width="24" height="24" viewBox="0 0 24 24" fill="none">
          <defs>
            <linearGradient id="ma" x1="0" y1="1" x2="1" y2="0">
              <stop offset="0" stopColor="#5a25e6" />
              <stop offset="1" stopColor="#1a9ff5" />
            </linearGradient>
          </defs>
          <path d="M0 0h24v24H0z" fill="url(#ma)" />
          <path d="M4 17.500L8.500 7M8 17.500L13 6.500M12.500 17.500L18.500 6.500V17.500M15 14h3.500" stroke="#fff" strokeWidth="1.900" />
        </svg>
      </Task>
      <Task>
        <svg width="22" height="24" viewBox="0 0 22 24">
          <path d="M0 0l11 5.500L22 0v18l-11 6L0 18zM4.500 6.500v9L11 19l6.500-3.500v-9L11 10z" fill="#c2292f" fillRule="evenodd" />
        </svg>
      </Task>
      <Task>
        <svg width="24" height="24" viewBox="0 0 24 24">
          <defs>
            <linearGradient id="ed" x1="0" y1="0" x2="1" y2=".3">
              <stop offset="0" stopColor="#1b8fd8" />
              <stop offset=".6" stopColor="#35c1c4" />
              <stop offset="1" stopColor="#64d84e" />
            </linearGradient>
          </defs>
          <circle cx="12" cy="12" r="11.800" fill="#0f5fb0" />
          <path d="M.2 11.500C1 4 6 .2 12 .2c7 0 12 5 11.800 10.500-.2 4-4 5.500-7.500 5-2-.3-2.500-1.500-1.700-2.700 1-2-.6-4.500-4-4.500C6 8.500 1 9.500.2 11.500z" fill="url(#ed)" />
          <path d="M9 12.500c-1 6 5 9.500 12 6.500l1 1.500-5 2.500C11 24 5 19 9 12.500z" fill="#1274c9" />
          <path d="M14.600 13c-1 1.600-.3 2.700 1.700 2.900 3 .4 5.500-.4 6.700-1.900.5 2-1 4.500-2.500 5-4 1.500-9.500 0-9.500-4 0-2 1.500-3.500 3-3.500z" fill="#dfe6ea" />
        </svg>
        <Running $w={6} $c="#7a7a7a" />
      </Task>
      <Task>
        <svg width="25" height="24" viewBox="0 0 25 24">
          <path d="M8 1h8l-5 18H4q-5 0-3.500-5L4 4q1-3 4-3z" fill="#1d8fe8" />
          <path d="M1 11l3-1h9l-2.500 9H4Q-.5 19 1 11z" fill="#a5cf4b" />
          <path d="M16 1q2 0 3 4H13l-1.500 5 2.500-9z" fill="#1550c0" />
          <path d="M14 5h7q5 0 3.500 5l-3 10q-1 3-4 3H10z" fill="#e1559e" />
          <path d="M14 5h7q5 0 3.500 5l-1 3.500H11.500z" fill="#a05ae0" />
          <path d="M7 19h6.500L12.500 23h-2Q8 23 7 19z" fill="#f58a3c" />
        </svg>
      </Task>
      <Task $active>
        <QLogo s={25} />
        <Running $w={16} $c="#12c26c" />
      </Task>
    </StartGroup>
    <Tray>
      <TrayIcon $w={32}>
        <svg width="12" height="7" viewBox="0 0 12 7" fill="none" stroke="#222" strokeWidth="1.300"><path d="M.8 6.300L6 1l5.200 5.300" /></svg>
      </TrayIcon>
      <TrayIcon $w={32}>
        <svg width="17" height="15" viewBox="0 0 17 15">
          <path d="M3.500 11Q0 10.500.7 7.500 1.500 5.500 4 5.500 5.500 1.500 9 1.500t5 4L8 11z" fill="#8d8d8d" stroke="#333" />
          <circle cx="12" cy="10" r="4.700" fill="#0b6bc7" />
          <path d="M12 7v1.200M12 9.200V13" stroke="#fff" strokeWidth="1.400" />
        </svg>
      </TrayIcon>
      <TrayIcon $w={32}>
        <svg width="18" height="18" viewBox="0 0 18 18" fill="none" stroke="#333" strokeWidth="1.100">
          <path d="M1.500 8A7.300 7.300 0 0 1 15 5M15.500 1v4.500H11M2 17v-4.500h4.500M2.500 13a7 7 0 0 0 5 3.500" />
          <circle cx="12.500" cy="12.500" r="4.300" fill="#f7981d" stroke="none" />
        </svg>
      </TrayIcon>
      <TrayIcon $w={31}>
        <svg width="16" height="13" viewBox="0 0 16 13" fill="none" strokeWidth="1.200">
          <path d="M1 5Q8-2 15 5" stroke="#9b9b9b" />
          <path d="M3.200 7.500q4.800-4.700 9.600 0" stroke="#777" />
          <path d="M5.300 9.700q2.700-2.500 5.400 0" stroke="#222" />
          <circle cx="8" cy="11" r="1.400" fill="#222" />
        </svg>
      </TrayIcon>
      <TrayIcon $w={16}>
        <svg width="15" height="13" viewBox="0 0 15 13" fill="none" stroke="#222" strokeWidth="1.100">
          <path d="M1 4.500h2.500L7 1.200v10.600L3.500 8.500H1z" />
          <path d="M9 4.500q1.500 2 0 4M11 2.800q2.800 3.700 0 7.400" />
          <path d="M12.800 1.200q3 5.300 0 10.600" stroke="#999" />
        </svg>
      </TrayIcon>
      <TrayIcon $w={34}>
        <svg width="17" height="11" viewBox="0 0 17 11" fill="none" stroke="#222" strokeWidth="1.100">
          <rect x=".6" y=".6" width="13" height="9" rx="2" />
          <path d="M2.500 2.500h5.500v5.200H2.500z" fill="#222" stroke="none" />
          <path d="M15.500 3.500v3" strokeWidth="1.600" />
        </svg>
      </TrayIcon>
      <Clock>
        11:19 AM
        <br />
        11/26/2024
      </Clock>
      <svg width="14" height="16" viewBox="0 0 14 16">
        <path d="M7 .5q4.500 0 4.800 5V9l1.700 2.800v.7H.5v-.7L2.200 9V5.500Q2.500.5 7 .5zM5 13.500h4q-.5 2-2 2t-2-2z" fill="#0a6e42" />
      </svg>
    </Tray>
  </TaskBar>
);

export default function App() {
  return (
    <>
      <Global />
      <Desktop>
        <MainWindow>
          <MainTitle>
            <TitleText><QLogo /><span>*HONEY POLLEN JUFRI_TUGAS PERTANIAN</span></TitleText>
            <Cross c="#8b8b8b" />
          </MainTitle>
          <MenuBar>
            <span>Pro<u>j</u>ect</span>
            <span><u>E</u>dit</span>
            <span><u>V</u>iew</span>
            <span><u>L</u>ayer</span>
            <span><u>S</u>ettings</span>
            <span><u>P</u>lugins</span>
          </MenuBar>
          <Toolbar>
            <Handle />
            <ToolIcons>
              <NewIcon /><FolderIcon /><SaveIcon /><LayoutIcon /><ManagerIcon /><StyleManagerIcon />
            </ToolIcons>
            <Handle $ml={10} />
            <PressedTool><HandIcon /></PressedTool>
            <Spacer />
            <svg width="28" height="24" viewBox="0 0 28 24" fill="none" stroke="#bdbdbd">
              <circle cx="7" cy="10" r="7.500" strokeWidth="2" strokeDasharray="3 1.500" />
              <circle cx="7" cy="10" r="4" />
              <path d="M9 11l9 5-4 1 3 5-2 1-3-5-3 2z" fill="#eee" />
            </svg>
            <Tri c="#999" s={9} />
          </Toolbar>
          <Toolbar>
            <Handle />
            <ToolIcons>
              <AddLayerIcon /><GeoPackageIcon /><ShapeIcon /><FeatherIcon /><ChipIcon /><MeshIcon /><VirtualIcon />
            </ToolIcons>
          </Toolbar>
          <Work>
            <Layers />
            <Splitter $w={7} $top={255}><Grip /></Splitter>
            <Canvas />
            <RightDock>
              <RightHeader><FloatIcon /><CloseIcon /></RightHeader>
              <RightInput />
              <RightTree>
                <div />
                <VBar>
                  <BarButton><Tri d="up" /></BarButton>
                  <Thumb $h={348} />
                  <Spacer />
                  <BarButton><Tri /></BarButton>
                </VBar>
              </RightTree>
            </RightDock>
          </Work>
          <StatusBar>
            <Locator><Magnifier />Type to locate (Ctrl+K)</Locator>
            <StatusField $w={114} $ml={318} />
            <StatusField $w={80} $ml={62} />
            <StatusField $w={83} $ml={82} />
            <Spacer />
            <svg width="18" height="17" viewBox="0 0 18 17">
              <path d="M9 1c5 0 8 2.500 8 6 0 2.500-1.500 4-3 5l2 4-5-3H9c-5 0-8-2.500-8-6s3-6 8-6z" fill="#5b5b5b" />
            </svg>
          </StatusBar>
        </MainWindow>
        <PropertiesDialog />
        <Tasks />
      </Desktop>
    </>
  );
}
